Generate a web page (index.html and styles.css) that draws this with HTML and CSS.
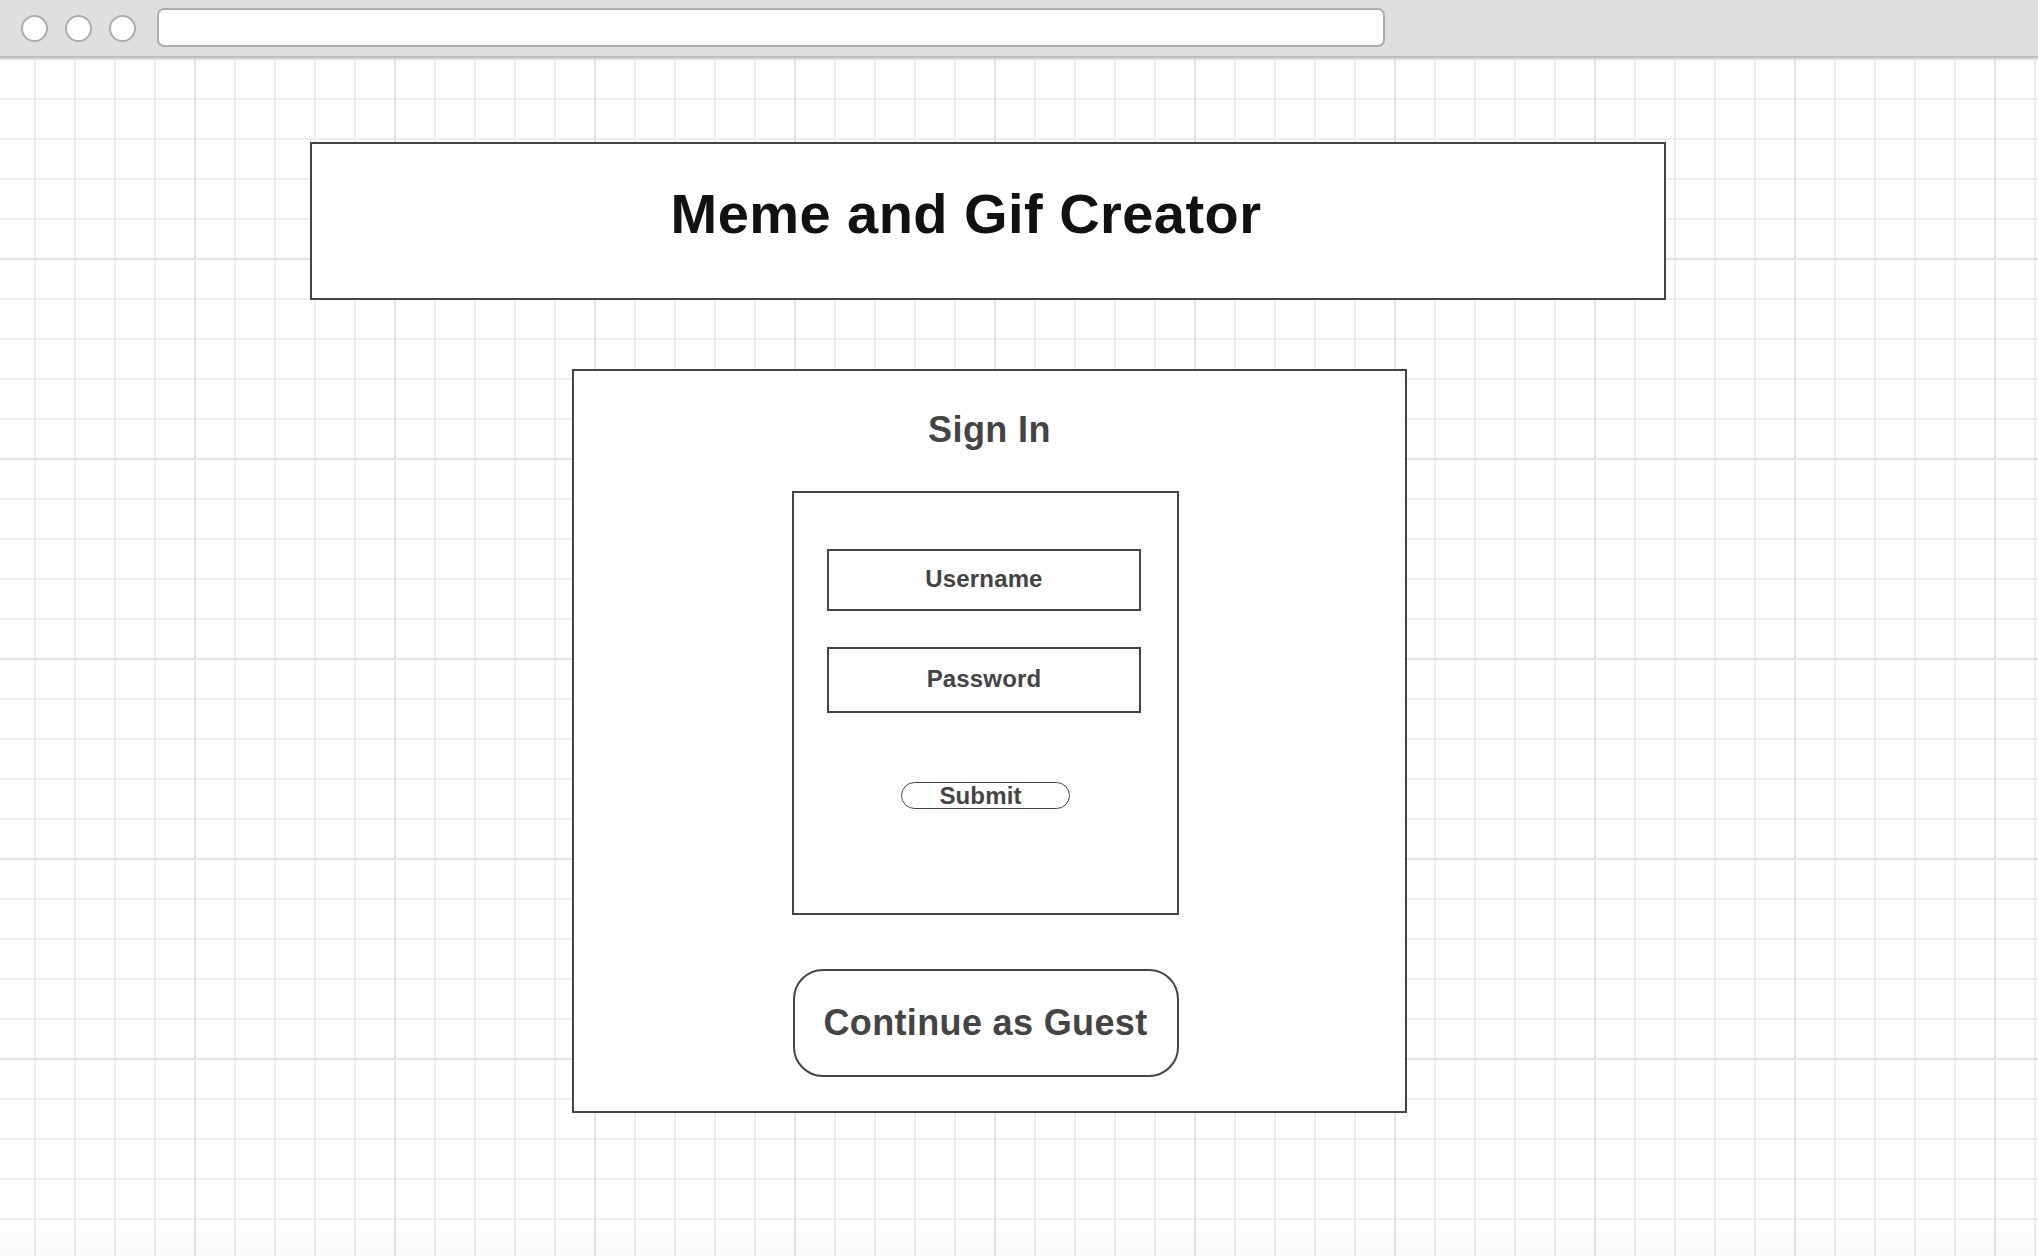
FILE: index.html
```html
<!DOCTYPE html>
<html lang="en">
<head>
<meta charset="utf-8">
<title>Meme and Gif Creator</title>
<link rel="stylesheet" href="styles.css">
</head>
<body>
<header class="browser-bar">
  <span class="dot"></span>
  <span class="dot"></span>
  <span class="dot"></span>
  <div class="address"></div>
</header>
<main class="canvas">
  <div class="wrap">
    <div class="title-box">
      <h1 class="title">Meme and Gif Creator</h1>
    </div>
    <section class="signin-box">
      <h2 class="signin-title">Sign In</h2>
      <form class="form-box">
        <div class="field field-user">Username</div>
        <div class="field field-pass">Password</div>
        <div class="submit">Submit</div>
      </form>
      <div class="guest">Continue as Guest</div>
    </section>
  </div>
</main>
<div class="bottom-fade"></div>
</body>
</html>
```
FILE: styles.css
```css
* { box-sizing: border-box; }
html, body { margin: 0; padding: 0; }
body {
  font-family: "Liberation Sans", Arial, Helvetica, sans-serif;
  background: #ffffff;
  overflow: hidden;
}
.browser-bar {
  height: 58px;
  background: #dfdfdf;
  border-bottom: 2px solid #bdbdbd;
  display: flex;
  align-items: center;
  padding-left: 21px;
  gap: 17px;
  box-shadow: 0 1px 4px rgba(0,0,0,0.06);
  position: relative;
  z-index: 2;
}
.dot {
  width: 27px;
  height: 27px;
  border-radius: 50%;
  background: #ffffff;
  border: 2px solid #acacac;
  flex: none;
}
.address {
  margin-left: 4px;
  width: 1228px;
  height: 39px;
  background: #ffffff;
  border: 2px solid #acacac;
  border-radius: 7px;
  margin-top: -1px;
}
.canvas {
  min-height: calc(100vh - 58px);
  background-color: #ffffff;
  background-image:
    linear-gradient(to right, #e3e3e3 2px, transparent 2px),
    linear-gradient(to bottom, #e3e3e3 2px, transparent 2px),
    linear-gradient(to right, #eeeeee 2px, transparent 2px),
    linear-gradient(to bottom, #eeeeee 2px, transparent 2px);
  background-size: 200px 200px, 200px 200px, 40px 40px, 40px 40px;
  background-position: 194px 0, 0 0, 34px 0, 0 0;
  padding-top: 84px;
}
.wrap {
  margin-left: 310px;
  width: 1356px;
  display: flex;
  flex-direction: column;
}
.title-box {
  height: 158px;
  border: 2px solid #444444;
  background: #ffffff;
  padding-top: 42px;
  padding-right: 44px;
  text-align: center;
}
.title {
  margin: 0;
  font-size: 56px;
  line-height: 1;
  font-weight: 700;
  letter-spacing: 0.45px;
  color: #111111;
}
.signin-box {
  margin-top: 69px;
  margin-left: 262px;
  width: 835px;
  border: 2px solid #444444;
  background: #ffffff;
  display: flex;
  flex-direction: column;
  align-items: center;
  padding-top: 41px;
  padding-bottom: 34px;
}
.signin-title {
  margin: 0;
  font-size: 36px;
  line-height: 1;
  font-weight: 700;
  letter-spacing: 0.4px;
  color: #444444;
}
.form-box {
  margin: 43px 8px 0 0;
  width: 387px;
  height: 424px;
  border: 2px solid #444444;
  display: flex;
  flex-direction: column;
  align-items: center;
  padding-top: 56px;
}
.field {
  width: 314px;
  border: 2px solid #444444;
  display: flex;
  align-items: center;
  justify-content: center;
  font-size: 24px;
  line-height: 1;
  font-weight: 700;
  letter-spacing: 0.15px;
  color: #444444;
  margin-right: 3px;
  padding-bottom: 2px;
}
.field-user { height: 62px; }
.field-pass { height: 66px; margin-top: 36px; }
.submit {
  margin-top: 69px;
  width: 169px;
  height: 27px;
  border: 1.5px solid #444444;
  border-radius: 14px;
  font-size: 24px;
  line-height: 25px;
  font-weight: 700;
  letter-spacing: 0.15px;
  color: #444444;
  text-align: center;
  padding-right: 10px;
}
.guest {
  margin: 54px 8px 0 0;
  width: 386px;
  height: 108px;
  border: 2px solid #444444;
  border-radius: 30px;
  display: flex;
  align-items: center;
  justify-content: center;
  font-size: 36px;
  line-height: 1;
  font-weight: 700;
  letter-spacing: 0.35px;
  color: #444444;
}
.bottom-fade {
  position: fixed;
  left: 0;
  right: 0;
  bottom: 0;
  height: 40px;
  background: linear-gradient(to bottom, rgba(0,0,0,0), rgba(0,0,0,0.025));
  pointer-events: none;
}
```
